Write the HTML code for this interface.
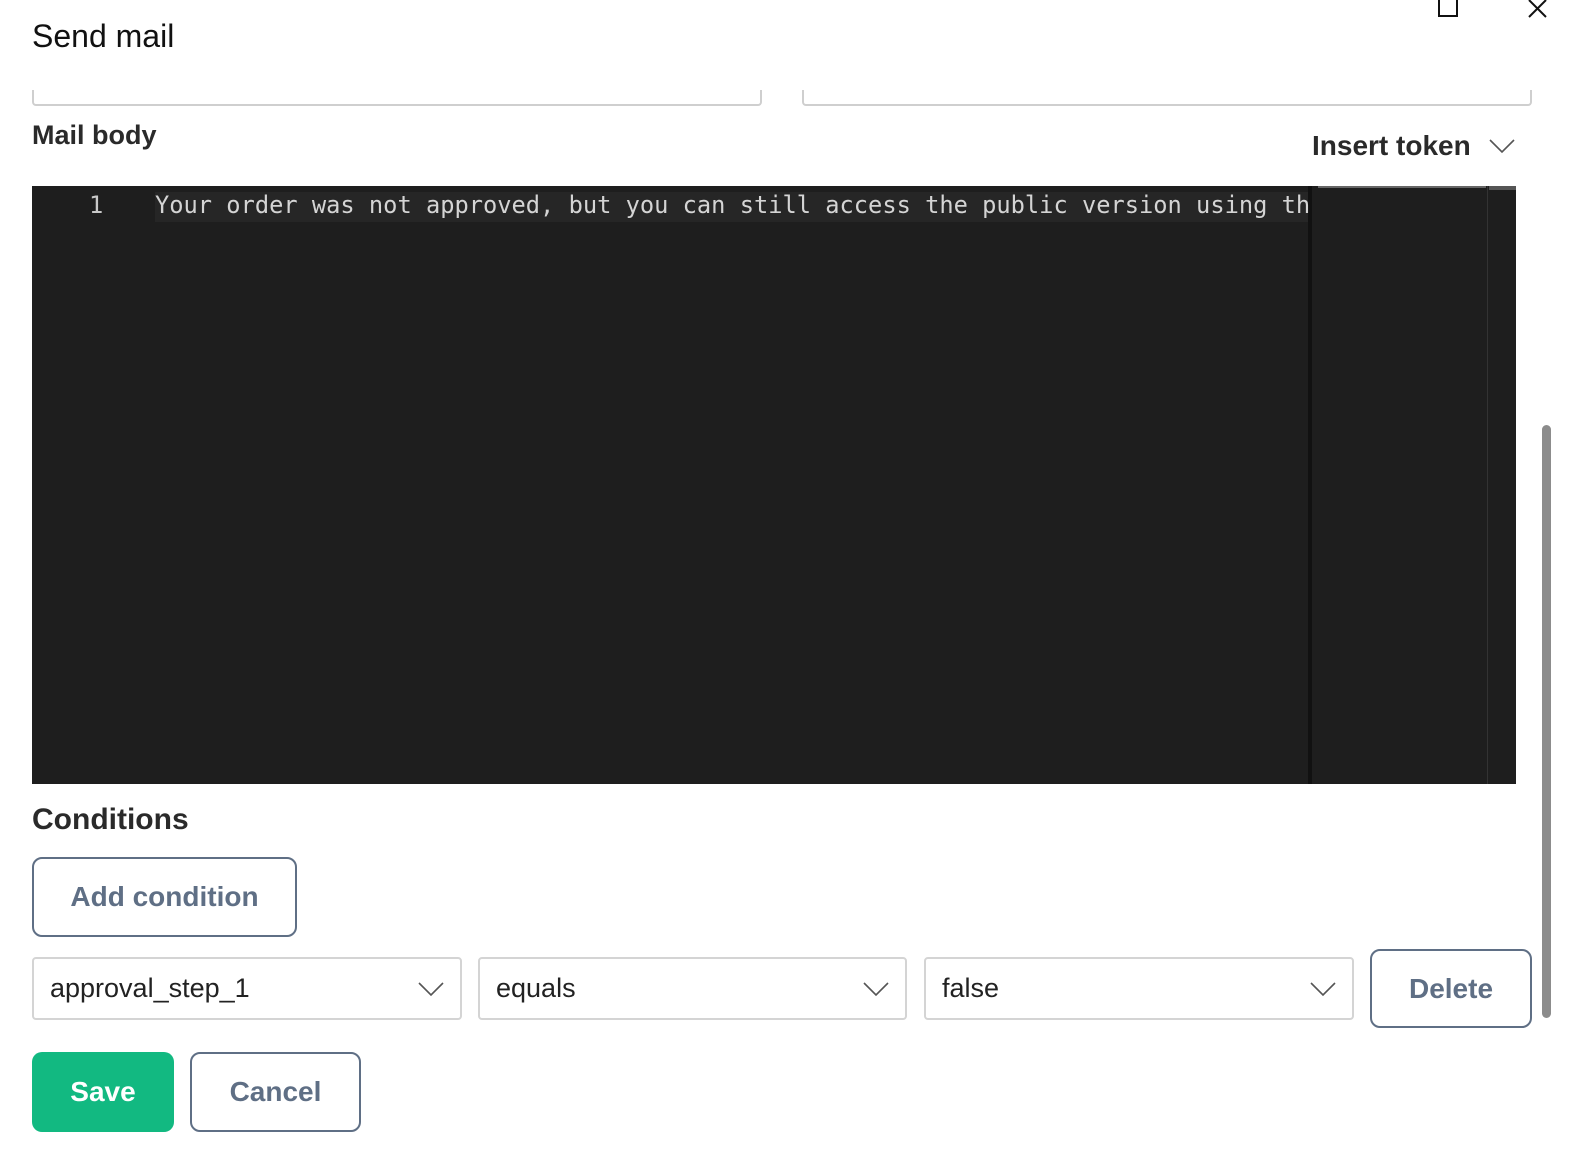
<!DOCTYPE html>
<html><head><meta charset="utf-8"><style>
*{box-sizing:border-box;margin:0;padding:0}
body{width:1574px;height:1164px;background:#fff;position:relative;overflow:hidden;font-family:"Liberation Sans",sans-serif;color:#222}
.a{position:absolute}
.sel{position:absolute;top:957px;height:63px;border:2px solid #d4d4d4;border-radius:4px;font-size:27px;color:#222;padding-left:16px;line-height:59px}
.sel svg{position:absolute;right:16px;top:22px}
.btn{position:absolute;border:2px solid #5f6f85;border-radius:10px;color:#5f6f85;font-weight:bold;font-size:28px;text-align:center}
</style></head><body>
<div class="a" style="left:32px;top:18px;font-size:32px;color:#111">Send mail</div>
<svg class="a" style="left:1437px;top:0" width="22" height="18"><path d="M2 0V16H20V0" fill="none" stroke="#111" stroke-width="2"/></svg>
<svg class="a" style="left:1527px;top:0" width="22" height="18"><path d="M2 0L19 17M19 0L2 17" fill="none" stroke="#111" stroke-width="2"/></svg>
<div class="a" style="left:32px;top:90px;width:730px;height:16px;border:2px solid #cfcfcf;border-top:none;border-radius:0 0 4px 4px"></div>
<div class="a" style="left:802px;top:90px;width:730px;height:16px;border:2px solid #cfcfcf;border-top:none;border-radius:0 0 4px 4px"></div>
<div class="a" style="left:32px;top:120px;font-size:27px;font-weight:bold;color:#2a2a2a">Mail body</div>
<div class="a" style="left:1312px;top:130px;font-size:28px;font-weight:bold;color:#2a2a2a">Insert token</div>
<svg class="a" style="left:1489px;top:138px" width="26" height="16"><path d="M1 2L13 14L25 2" fill="none" stroke="#555" stroke-width="1.6"/></svg>
<div class="a" style="left:32px;top:186px;width:1484px;height:598px;background:#1e1e1e"></div>
<div class="a" style="left:155px;top:192px;width:1155px;height:30px;background:#262626"></div>
<div class="a" style="left:1308px;top:186px;width:4px;height:598px;background:#111"></div>
<div class="a" style="left:1487px;top:186px;width:1px;height:598px;background:#333"></div>
<div class="a" style="left:1489px;top:186px;width:27px;height:4px;background:#555"></div>
<div class="a" style="left:1318px;top:186px;width:168px;height:2px;background:#666"></div>
<div class="a" style="left:89px;top:190px;font-family:'DejaVu Sans Mono','Liberation Mono',monospace;font-size:23.7px;color:#c8c8c8;line-height:30px">1</div>
<div class="a" style="left:155px;top:190px;width:1155px;overflow:hidden;white-space:pre;font-family:'DejaVu Sans Mono','Liberation Mono',monospace;font-size:23.7px;color:#d4d4d4;line-height:30px">Your order was not approved, but you can still access the public version using this link</div>
<div class="a" style="left:1542px;top:425px;width:9px;height:593px;background:#8c8c8c;border-radius:5px"></div>
<div class="a" style="left:32px;top:803px;font-size:30px;font-weight:bold;color:#2a2a2a">Conditions</div>
<div class="btn" style="left:32px;top:857px;width:265px;height:80px;line-height:76px">Add condition</div>
<div class="sel" style="left:32px;width:430px">approval_step_1<svg width="26" height="16"><path d="M1 2L13 14L25 2" fill="none" stroke="#555" stroke-width="1.6"/></svg></div>
<div class="sel" style="left:478px;width:429px">equals<svg width="26" height="16"><path d="M1 2L13 14L25 2" fill="none" stroke="#555" stroke-width="1.6"/></svg></div>
<div class="sel" style="left:924px;width:430px">false<svg width="26" height="16"><path d="M1 2L13 14L25 2" fill="none" stroke="#555" stroke-width="1.6"/></svg></div>
<div class="btn" style="left:1370px;top:949px;width:162px;height:79px;line-height:75px">Delete</div>
<div class="a" style="left:32px;top:1052px;width:142px;height:80px;background:#12b981;border-radius:10px;color:#fff;font-weight:bold;font-size:28px;text-align:center;line-height:80px">Save</div>
<div class="btn" style="left:190px;top:1052px;width:171px;height:80px;line-height:76px">Cancel</div>
</body></html>
